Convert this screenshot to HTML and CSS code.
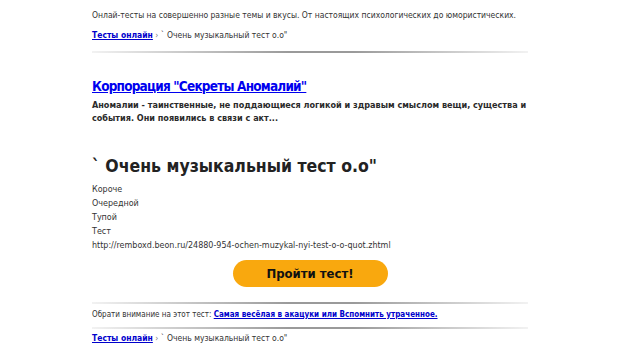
FILE: index.html
```html
<!DOCTYPE html>
<html>
<head>
<meta charset="utf-8">
<link rel="stylesheet" href="styles.css">
</head>
<body>
<div class="page">
  <p class="intro">Онлай-тесты на совершенно разные темы и вкусы. От настоящих психологических до юмористических.</p>
  <div class="crumbs"><a href="#">Тесты онлайн</a> <span class="sep">›</span> ` Очень музыкальный тест о.о"</div>
  <div class="hr hr-top"></div>
  <div class="promo">
    <a class="promo-title" href="#">Корпорация "Секреты Аномалий"</a>
    <p class="promo-text">Аномалии - таинственные, не поддающиеся логикой и здравым смыслом вещи, существа и события. Они появились в связи с акт...</p>
  </div>
  <h1 class="title">` Очень музыкальный тест о.о"</h1>
  <ul class="desc">
    <li>Короче</li>
    <li>Очередной</li>
    <li>Тупой</li>
    <li>Тест</li>
    <li>http://remboxd.beon.ru/24880-954-ochen-muzykal-nyi-test-o-o-quot.zhtml</li>
  </ul>
  <div class="btn-row"><a class="btn" href="#">Пройти тест!</a></div>
  <div class="hr hr-mid"></div>
  <p class="notice">Обрати внимание на этот тест: <a href="#">Самая весёлая в акацуки или Вспомнить утраченное.</a></p>
  <div class="hr hr-low"></div>
  <div class="crumbs crumbs-bottom"><a href="#">Тесты онлайн</a> <span class="sep">›</span> ` Очень музыкальный тест о.о"</div>
</div>
</body>
</html>
```
FILE: styles.css
```css
html, body { margin: 0; padding: 0; background: #fff; }
body { font-family: "DejaVu Sans Condensed", "DejaVu Sans", Verdana, sans-serif; color: #333; }
.page { width: 436px; margin: 0 auto; }
.intro { margin: 8px 0 0; font-size: 8.5px; line-height: 14px; color: #333; white-space: nowrap; }
.crumbs { margin-top: 6px; font-size: 8.5px; line-height: 14px; color: #333; white-space: nowrap; }
.crumbs a { color: #0000cc; font-weight: bold; }
.crumbs .sep { color: #777; }
.crumbs-bottom { margin-top: 2px; }
.hr { height: 2px; background: linear-gradient(to right, #f2f2f2, #9a9a9a 45%, #9a9a9a 60%, #f2f2f2); }
.hr-top { margin-top: 9px; }
.hr-mid { margin-top: 15px; }
.hr-low { margin-top: 5px; }
.promo { margin-top: 23px; }
.promo-title { display: inline-block; font-size: 13.5px; letter-spacing: -0.8px; font-weight: bold; color: #0000ee; line-height: 18px; }
.promo-text { margin: 4px 0 0; font-size: 9px; font-weight: bold; line-height: 13px; color: #2a2a2a; }
.title { margin: 29px 0 0; font-size: 17.5px; line-height: 24px; color: #222; }
.desc { list-style: none; margin: 5px 0 0; padding: 0; font-family: "DejaVu Sans", Verdana, sans-serif; font-size: 8px; line-height: 14px; color: #333; }
.btn-row { display: flex; justify-content: center; margin-top: 7px; }
.btn { display: flex; align-items: center; justify-content: center; width: 155px; height: 27px; border-radius: 14px; background: #f9a80e; color: #111; font-weight: bold; font-size: 13px; text-decoration: none; }
.notice { margin: 4px 0 0; font-size: 8px; line-height: 14px; color: #333; white-space: nowrap; }
.notice a { color: #0000cc; font-weight: bold; }
```
